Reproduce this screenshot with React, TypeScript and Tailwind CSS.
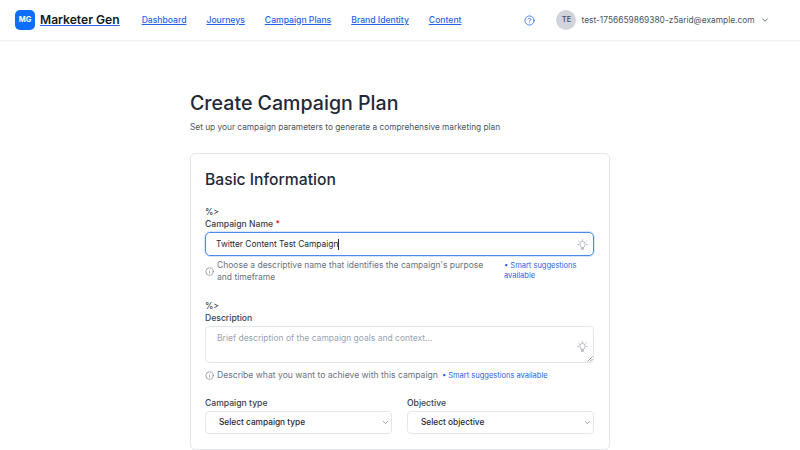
import { ChevronDown, CircleHelp, Info } from "lucide-react";

const navItems = ["Dashboard", "Journeys", "Campaign Plans", "Brand Identity", "Content"];

function Bulb({ className }: { className: string }) {
  return (
    <span className={"flex items-center text-[#9ca3af] " + className}>
      <svg width="11" height="11" viewBox="0 0 24 24" fill="none" stroke="currentColor" strokeWidth="1.6" strokeLinecap="round" strokeLinejoin="round">
        <path d="M12 1.5v2M3.5 4.5l1.5 1.5M20.5 4.5 19 6M1.5 12h2M20.5 12h2" />
        <path d="M9 17.5c0-2-2.8-3-2.8-6.5a5.8 5.8 0 0 1 11.6 0c0 3.5-2.8 4.5-2.8 6.5z" />
        <path d="M9.5 20.5h5M10.5 23h3" />
      </svg>
    </span>
  );
}

function Hint() {
  return <Info size={9} strokeWidth={1.6} className="shrink-0 text-[#6b7280]" />;
}

function Select({ label, value }: { label: string; value: string }) {
  return (
    <div className="flex flex-col">
      <div className="h-[14px] text-[8.6px] leading-[13px] font-medium text-[#374151]">{label}</div>
      <div className="flex h-[23px] items-center justify-between rounded-[4px] border border-[#e5e7eb] bg-white pl-[13px] pr-[1px] text-[8.3px] font-medium text-[#1f2937]">
        <span>{value}</span>
        <ChevronDown size={9} strokeWidth={1.8} className="text-[#6b7280]" />
      </div>
    </div>
  );
}

export default function App() {
  return (
    <div className="flex h-[450px] w-[800px] flex-col overflow-hidden bg-white font-['Inter',sans-serif]">
      <header className="flex h-[40px] shrink-0 items-center whitespace-nowrap bg-white px-[15px] shadow-[0_1px_2px_rgba(0,0,0,0.08)]">
        <div className="flex h-[20px] w-[20px] shrink-0 items-center justify-center rounded-[5px] bg-[#0d6efd] text-[7.5px] font-bold text-white">MG</div>
        <a className="ml-[5px] text-[12.1px] leading-[20px] font-semibold text-[#111827] underline decoration-[#2563eb]">Marketer Gen</a>
        <nav className="ml-[22px] flex gap-[20px]">
          {navItems.map((item) => (
            <a key={item} className="text-[8.6px] font-medium text-[#2563eb] underline">{item}</a>
          ))}
        </nav>
        <CircleHelp size={11} strokeWidth={1.7} className="ml-[63px] shrink-0 text-[#2563eb]" />
        <div className="ml-[21px] flex h-[20px] w-[20px] shrink-0 items-center justify-center rounded-full bg-[#d1d5db] text-[7.5px] font-semibold text-[#4b5563]">TE</div>
        <span className="ml-[5px] text-[8.4px] text-[#4b5563]">test-1756659869380-z5arid@example.com</span>
        <ChevronDown size={10} strokeWidth={2} className="ml-[5px] shrink-0 text-[#4b5563]" />
      </header>

      <main className="mx-auto w-[420px] pt-[50px]">
        <h1 className="text-[19.6px] leading-[26px] font-medium text-[#1f2937]">Create Campaign Plan</h1>
        <p className="mt-[5px] text-[8.3px] leading-[13px] text-[#4b5563]">Set up your campaign parameters to generate a comprehensive marketing plan</p>

        <section className="mt-[19px] h-[297px] rounded-[5px] border border-[#e5e7eb] bg-white pt-[16px] pr-[15px] pl-[14px]">
          <h2 className="text-[15.7px] leading-[20px] font-medium text-[#1f2937]">Basic Information</h2>

          <div className="mt-[17px] text-[8.5px] leading-[11px] text-[#1f2937]">%&gt;</div>
          <div className="text-[8.6px] leading-[13px] font-medium text-[#374151]">
            Campaign Name <span className="text-[#dc2626]">*</span>
          </div>
          <div className="mt-[1px] flex h-[24px] items-center justify-between rounded-[5px] border-[1.5px] border-[#4a8ae8] pr-[5px] pl-[10px] text-[8.4px] text-[#1f2937] shadow-[0_0_0_1px_rgba(59,130,246,0.2)]">
            <span className="border-r border-[#1f2937] leading-[11px]">Twitter Content Test Campaign</span>
            <Bulb className="" />
          </div>
          <div className="mt-[3px] flex items-center">
            <Hint />
            <p className="ml-[3px] w-[272px] text-[8.5px] leading-[12px] text-[#6b7280]">
              Choose a descriptive name that identifies the campaign's purpose and timeframe
            </p>
            <p className="ml-[15px] w-[84px] text-[7.5px] leading-[10px] text-[#2563eb]">• Smart suggestions available</p>
          </div>

          <div className="mt-[18px] text-[8.5px] leading-[11px] text-[#1f2937]">%&gt;</div>
          <div className="text-[8.6px] leading-[13px] font-medium text-[#374151]">Description</div>
          <div className="relative mt-[1px] flex h-[37px] justify-between rounded-[4px] border border-[#e5e7eb] pt-[5px] pr-[5px] pl-[11px] text-[8.5px] leading-[13px] text-[#9ca3af]">
            <span>Brief description of the campaign goals and context...</span>
            <Bulb className="mt-[9px] h-[11px]" />
            <svg className="absolute right-0 bottom-0 text-[#6b7280]" width="7" height="7" viewBox="0 0 7 7" fill="none" stroke="currentColor" strokeWidth="0.7">
              <path d="M1.5 6.5 6.5 1.5M4 6.5 6.5 4" />
            </svg>
          </div>
          <div className="mt-[6px] flex items-center">
            <Hint />
            <span className="ml-[3px] text-[8.6px] leading-[13px] text-[#6b7280]">Describe what you want to achieve with this campaign</span>
            <span className="ml-[4px] text-[7.5px] leading-[13px] text-[#2563eb]">• Smart suggestions available</span>
          </div>

          <div className="mt-[15px] grid grid-cols-2 gap-[15px]">
            <Select label="Campaign type" value="Select campaign type" />
            <Select label="Objective" value="Select objective" />
          </div>
        </section>
      </main>
    </div>
  );
}
